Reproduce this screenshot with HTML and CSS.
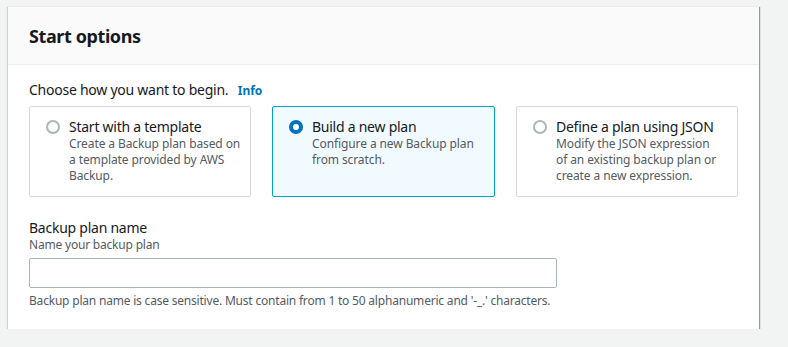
FILE: index.html
```html
<!DOCTYPE html>
<html>
<head>
<meta charset="utf-8">
<link rel="stylesheet" href="styles.css">
</head>
<body>
<div class="card">
  <div class="card-header">
    <h2 class="card-title">Start options</h2>
  </div>
  <div class="card-body">
    <div class="choose-label">Choose how you want to begin. <a class="info" href="#">Info</a></div>
    <div class="tiles">
      <div class="tile">
        <span class="radio"></span>
        <div class="tile-text">
          <div class="tile-title">Start with a template</div>
          <div class="tile-desc">Create a Backup plan based on<br>a template provided by AWS<br>Backup.</div>
        </div>
      </div>
      <div class="tile selected">
        <span class="radio checked"></span>
        <div class="tile-text">
          <div class="tile-title">Build a new plan</div>
          <div class="tile-desc">Configure a new Backup plan<br>from scratch.</div>
        </div>
      </div>
      <div class="tile">
        <span class="radio"></span>
        <div class="tile-text">
          <div class="tile-title">Define a plan using JSON</div>
          <div class="tile-desc">Modify the JSON expression<br>of an existing backup plan or<br>create a new expression.</div>
        </div>
      </div>
    </div>
    <div class="field">
      <div class="field-label">Backup plan name</div>
      <div class="field-desc">Name your backup plan</div>
      <input class="field-input" type="text">
      <div class="field-hint">Backup plan name is case sensitive. Must contain from 1 to 50 alphanumeric and '-_.' characters.</div>
    </div>
  </div>
</div>
</body>
</html>
```

FILE: styles.css
```css
html, body {
  margin: 0;
  padding: 0;
  background: #f2f3f3;
}
body {
  padding: 6px 28px 0 8px;
  font-family: "Noto Sans", "Open Sans", sans-serif;
  color: #16191f;
}
.card {
  width: 751px;
  background: #ffffff;
  border-top: 1px solid #eaeded;
  box-shadow: 1px 1px 1px 0 rgba(0, 28, 36, 0.3), 1px 1px 1px 0 rgba(0, 28, 36, 0.15), -1px 1px 1px 0 rgba(0, 28, 36, 0.15);
}
.card-header {
  background: #fafafa;
  border-bottom: 1px solid #eaeded;
  height: 57px;
  display: flex;
  align-items: center;
  padding: 0 21px;
}
.card-title {
  margin: 0;
  font-size: 18px;
  font-weight: 700;
  line-height: 22px;
  letter-spacing: -0.4px;
}
.card-body {
  padding: 15px 20px 20px 21px;
}
.choose-label {
  font-size: 14px;
  line-height: 20px;
  letter-spacing: -0.25px;
  margin-bottom: 5px;
}
.info {
  color: #0073bb;
  font-weight: 700;
  font-size: 12px;
  text-decoration: none;
  margin-left: 6px;
  letter-spacing: 0;
}
.tiles {
  display: grid;
  grid-template-columns: 222px 223px 222px;
  column-gap: 21px;
}
.tile {
  height: 91px;
  box-sizing: border-box;
  border: 1px solid #d5dbdb;
  border-radius: 2px;
  background: #fff;
  display: flex;
  align-items: flex-start;
  padding: 10px 10px 0 16px;
}
.tile.selected {
  border-color: #00a1c9;
  background: #f1faff;
}
.radio {
  flex: none;
  width: 14px;
  height: 14px;
  box-sizing: border-box;
  border: 2px solid #aab7b8;
  border-radius: 50%;
  background: #fff;
  margin-top: 3px;
  margin-right: 9px;
}
.radio.checked {
  border: 4px solid #0073bb;
}
.tile-title {
  font-size: 14px;
  line-height: 20px;
  letter-spacing: -0.25px;
}
.tile-desc {
  font-size: 12px;
  line-height: 16px;
  color: #545b64;
  letter-spacing: -0.1px;
  white-space: nowrap;
  margin-top: -1px;
}
.field {
  margin-top: 21px;
}
.field-label {
  font-size: 14px;
  line-height: 20px;
  letter-spacing: -0.25px;
}
.field-desc {
  font-size: 12px;
  line-height: 16px;
  color: #545b64;
  letter-spacing: -0.2px;
  margin-top: -1px;
}
.field-input {
  display: block;
  width: 528px;
  height: 30px;
  box-sizing: border-box;
  margin-top: 5px;
  border: 1px solid #aab7b8;
  border-radius: 2px;
  background: #fff;
  padding: 4px 10px;
}
.field-hint {
  font-size: 12px;
  line-height: 16px;
  color: #545b64;
  letter-spacing: -0.2px;
  margin-top: 5px;
}
```
